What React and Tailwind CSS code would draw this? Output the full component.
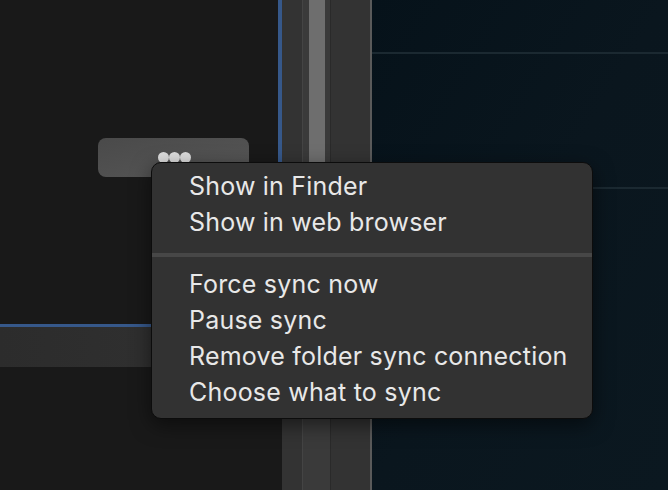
import React from "react";

const items1 = ["Show in Finder", "Show in web browser"];
const items2 = ["Force sync now", "Pause sync", "Remove folder sync connection", "Choose what to sync"];

export default function App() {
  return (
    <div className="relative w-[668px] h-[490px] overflow-hidden flex bg-[#191919]" style={{ fontFamily: "Inter, 'Liberation Sans', sans-serif" }}>
      {/* Left column */}
      <div className="w-[282px] flex flex-col">
        <div className="h-[327px] bg-[#191919] border-r-4 border-b-[3px] border-[#36588a]" />
        <div className="h-[40px] bg-gradient-to-r from-[#2c2c2c] to-[#323232]" />
        <div className="flex-1 bg-[#191919]" />
      </div>
      {/* Middle strip */}
      <div className="flex h-full">
        <div className="w-[20px] bg-[#333333]" />
        <div className="w-[28px] bg-[#3a3a3a] border-l border-[#444444] flex justify-center">
          <div className="w-[16px] h-[300px] bg-[#6e6e6e] rounded-b-sm" />
        </div>
        <div className="w-[40px] bg-[#333333] border-l border-[#2a2a2a]" />
        <div className="w-[2px] bg-[#5a5a5a]" />
      </div>
      {/* Right panel */}
      <div className="flex-1 bg-gradient-to-br from-[#06121a] via-[#0a161e] to-[#0b1820] flex flex-col">
        <div className="h-[52px]" />
        <div className="h-[2px] bg-[#1b2931]" />
        <div className="h-[133px]" />
        <div className="h-[2px] bg-[#1b2931]" />
      </div>

      {/* More button */}
      <div className="absolute left-[98px] top-[138px] w-[151px] h-[39px] rounded-lg bg-gradient-to-br from-[#4a4a4a] to-[#575757] flex justify-center pt-[14px] pl-[1px]">
        <span className="w-[11px] h-[11px] rounded-full bg-[#dcdcdc]" />
        <span className="w-[11px] h-[11px] rounded-full bg-[#dcdcdc]" />
        <span className="w-[11px] h-[11px] rounded-full bg-[#dcdcdc]" />
      </div>

      {/* Context menu */}
      <div className="absolute left-[151px] top-[162px] w-[442px] h-[257px] rounded-[10px] bg-[#323232] border border-[#0c0c0c] shadow-[0_6px_20px_rgba(0,0,0,0.5)] pt-[5px] text-[#e8e8e8] text-[25px] tracking-[0.2px]">
        {items1.map((t) => (
          <div key={t} className="h-[36px] leading-[36px] pl-[37px] whitespace-nowrap">{t}</div>
        ))}
        <div className="mt-[13px] mb-[9px] h-[4px] bg-[#474747]" />
        {items2.map((t) => (
          <div key={t} className="h-[36px] leading-[36px] pl-[37px] whitespace-nowrap">{t}</div>
        ))}
      </div>
    </div>
  );
}
